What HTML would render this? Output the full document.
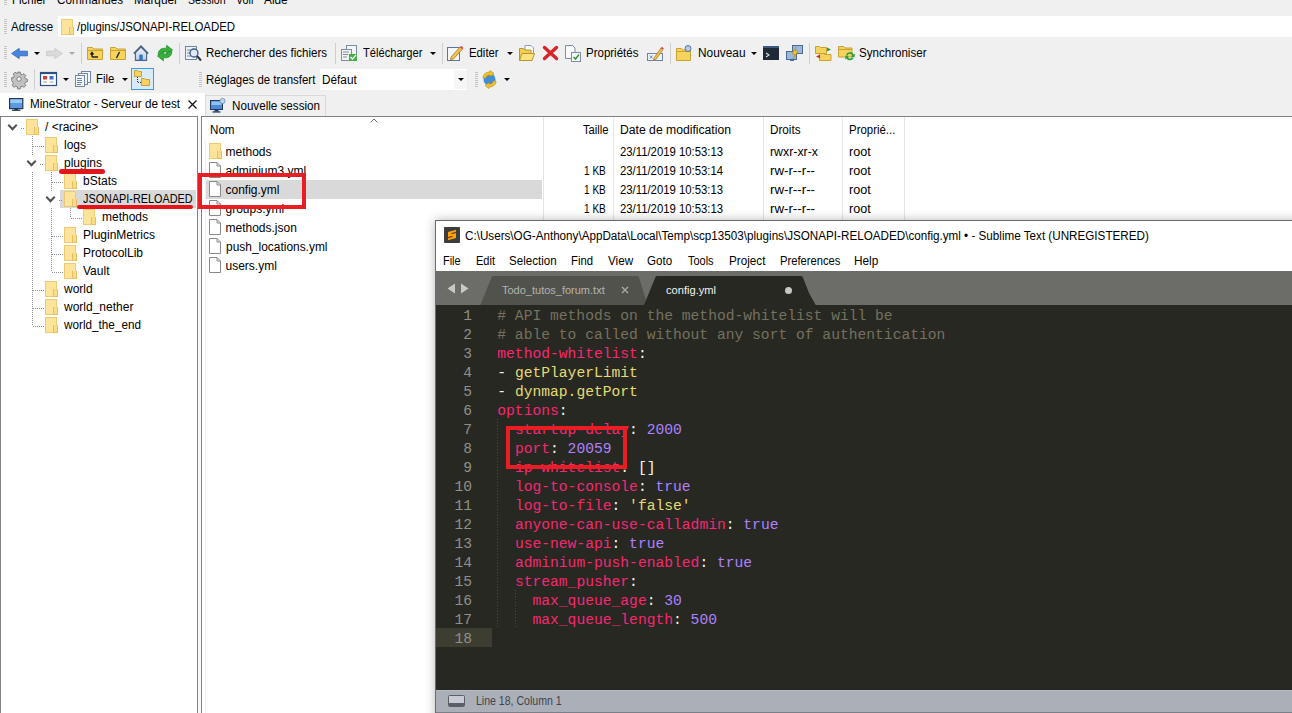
<!DOCTYPE html>
<html><head><meta charset="utf-8">
<style>
*{margin:0;padding:0;box-sizing:border-box}
html,body{width:1292px;height:713px;overflow:hidden;background:#f0f0f0;font-family:"Liberation Sans",sans-serif;font-size:12px;color:#000}
.a{position:absolute}
.t{position:absolute;white-space:nowrap;transform-origin:0 0}
svg{position:absolute;overflow:visible}
.grip{position:absolute;width:3px;background:repeating-linear-gradient(to bottom,#c4c4c4 0 1px,transparent 1px 2px)}
.sep{position:absolute;width:1px;background:#cfcfcf}
.dd{position:absolute;width:0;height:0;border-left:3px solid transparent;border-right:3px solid transparent;border-top:3px solid #000}
.fo{position:absolute;width:12px;height:16px;background:#fde49a;border:1px solid #eccb72}
.fo:after{content:"";position:absolute;right:-2px;bottom:-1px;width:3px;height:7px;border:1px solid #e6c062;border-top:none;background:#fbdc86}
.fi{position:absolute;width:12px;height:16px}
.dv{position:absolute;width:1px;background:repeating-linear-gradient(to bottom,#8c8c8c 0 1px,transparent 1px 2px)}
.dh{position:absolute;height:1px;background:repeating-linear-gradient(to right,#8c8c8c 0 1px,transparent 1px 2px)}
.chev{position:absolute;width:7px;height:7px;border-right:2px solid #505050;border-bottom:2px solid #505050;transform:rotate(45deg)}
.col{position:absolute;width:1px;background:#e5e5e5}
#subl{position:absolute;left:435px;top:220px;width:900px;height:500px;z-index:5;background:#272822;border:1px solid #6a6a6a;box-shadow:0 0 10px rgba(0,0,0,0.28)}
#subl .t{z-index:6}
.cl{position:absolute;left:497.3px;padding-top:2px;font-family:"Liberation Mono",monospace;font-size:14.65px;line-height:19px;white-space:pre;color:#f8f8f2;z-index:6}
.ln{position:absolute;left:436px;padding-top:2px;width:36px;text-align:right;font-family:"Liberation Mono",monospace;font-size:14.58px;line-height:19px;color:#90908a;z-index:6}
.c{color:#75715e}.k{color:#f92672}.s{color:#e6db74}.n{color:#ae81ff}.w{color:#f8f8f2}
.red{position:absolute;z-index:20;border:4.6px solid #ea1d25}
.rul{position:absolute;z-index:20;height:4.6px;background:#e3151c;border-radius:3px}
</style></head><body>

<!-- address field -->
<div class="grip" style="left:4px;top:19px;height:15px"></div>
<div class="a" style="left:58px;top:16px;width:1234px;height:21px;background:#fff"></div>
<div class="fo" style="left:61px;top:19px;height:16px"></div>
<div class="grip" style="left:4px;top:0px;height:6px"></div>

<!-- toolbar 1 -->
<div class="grip" style="left:4px;top:46px;height:13px"></div>
<svg style="left:11px;top:48px" width="17" height="11" viewBox="0 0 17 11"><path d="M0.6 5.5 L8.2 0.4 L8.2 3.2 L16.4 3.2 L16.4 7.8 L8.2 7.8 L8.2 10.6 Z" fill="#4688e0" stroke="#2b5fb4" stroke-width="0.8" stroke-linejoin="round"/></svg>
<div class="dd" style="left:34px;top:52px"></div>
<svg style="left:46px;top:48px" width="17" height="11" viewBox="0 0 17 11"><path d="M16.4 5.5 L8.8 0.4 L8.8 3.2 L0.6 3.2 L0.6 7.8 L8.8 7.8 L8.8 10.6 Z" fill="#dadada" stroke="#c8c8c8" stroke-width="0.8" stroke-linejoin="round"/></svg>
<div class="dd" style="left:69px;top:52px;border-top-color:#a8a8a8"></div>
<div class="sep" style="left:81px;top:43px;height:21px"></div>
<svg style="left:87px;top:46px" width="16" height="14" viewBox="0 0 16 14"><path d="M0.5 1.5 h5 l1.5 1.5 h8.5 v10.5 h-15 z" fill="#f6d35c" stroke="#c9a233"/><path d="M0.5 4.5 h15" stroke="#c9a233"/><path d="M5 11 h6 M5 11 v-4 M3.5 8.5 L5 6.5 L6.5 8.5" stroke="#222" stroke-width="1.4" fill="none"/></svg>
<svg style="left:110px;top:46px" width="16" height="14" viewBox="0 0 16 14"><path d="M0.5 1.5 h5 l1.5 1.5 h8.5 v10.5 h-15 z" fill="#f6d35c" stroke="#c9a233"/><path d="M0.5 4.5 h15" stroke="#c9a233"/><path d="M9.5 6 L6.5 12" stroke="#222" stroke-width="1.4"/></svg>
<svg style="left:133px;top:45px" width="16" height="16" viewBox="0 0 16 16"><defs><linearGradient id="hg" x1="0" y1="0" x2="0" y2="1"><stop offset="0" stop-color="#eef3fa"/><stop offset="1" stop-color="#b9cde6"/></linearGradient></defs><path d="M8 2.2 L13.6 7.6 L13.6 15.4 L2.4 15.4 L2.4 7.6 Z" fill="url(#hg)" stroke="#4d6382" stroke-width="1.1"/><path d="M0.8 8.6 L8 1.2 L15.2 8.6" stroke="#4d6382" stroke-width="1.6" fill="none"/><rect x="6.3" y="9.6" width="3.4" height="5.8" fill="#2f72cc"/></svg>
<svg style="left:157px;top:45px" width="16" height="16" viewBox="0 0 16 16"><path d="M1.2 9.5 C1.2 5.2 3.8 3.2 8 3.2 L9.6 3.2 L9.6 0.2 L15.6 5 L9.6 9.8 L9.6 6.9 L8 6.9 C5.6 6.9 4.9 7.8 4.7 9.5 Z" fill="#36b23a" stroke="#23872a" stroke-width="0.7"/><path d="M1.2 9.5 C1.2 5.2 3.8 3.2 8 3.2 L9.6 3.2 L9.6 0.2 L15.6 5 L9.6 9.8 L9.6 6.9 L8 6.9 C5.6 6.9 4.9 7.8 4.7 9.5 Z" transform="rotate(180 8 8)" fill="#36b23a" stroke="#23872a" stroke-width="0.7"/></svg>
<div class="sep" style="left:179px;top:43px;height:21px"></div>
<svg style="left:185px;top:45px" width="17" height="17" viewBox="0 0 17 17"><rect x="0.5" y="1.5" width="11" height="13" fill="#eef2f8" stroke="#6c86a8"/><path d="M2 5h4 M2 8h3 M2 11h4" stroke="#6c86a8"/><circle cx="9" cy="8" r="4" fill="#dfe9f5" stroke="#3d5a80" stroke-width="1.3"/><path d="M12 11 L16 15.5" stroke="#333" stroke-width="2"/></svg>
<div class="sep" style="left:335px;top:43px;height:21px"></div>
<svg style="left:341px;top:45px" width="17" height="16" viewBox="0 0 17 16"><rect x="5.5" y="0.5" width="10" height="11" fill="#f4f4f4" stroke="#7a8ca6"/><rect x="0.5" y="4.5" width="10" height="11" fill="#f4f4f4" stroke="#7a8ca6"/><path d="M2 7h6 M2 9.5h5 M2 12h4" stroke="#7a8ca6"/><rect x="8" y="9" width="8" height="7" fill="#43b043"/><path d="M9.5 12 L11.5 14 L15 10" stroke="#fff" stroke-width="1.3" fill="none"/></svg>
<div class="dd" style="left:430px;top:52px"></div>
<div class="sep" style="left:442px;top:43px;height:21px"></div>
<svg style="left:447px;top:45px" width="17" height="16" viewBox="0 0 17 16"><rect x="0.5" y="2.5" width="12" height="13" fill="#f4f6f9" stroke="#5d7597"/><path d="M4 12 L13 2 L15.5 4 L6.5 14 L3.5 14.5 Z" fill="#f2c24a" stroke="#a8782a" stroke-width="0.8"/><path d="M13 2 L15.5 4 L16.5 3 L14 0.8 Z" fill="#e0404a"/></svg>
<div class="dd" style="left:507px;top:52px"></div>
<svg style="left:519px;top:45px" width="16" height="16" viewBox="0 0 16 16"><path d="M6 0.5 h6 l2.5 2.5 v7 h-8.5z" fill="#fff" stroke="#8aa0bd"/><path d="M0.5 3.5 h4 l1.5 1.5 h6 v10.5 h-11.5 z" fill="#f2cd4e" stroke="#b8952c"/><path d="M0.5 15.5 L3 8.5 h12.5 L13 15.5 z" fill="#fbe37c" stroke="#b8952c"/></svg>
<svg style="left:543px;top:46px" width="15" height="14" viewBox="0 0 15 14"><path d="M1.5 1.5 L13.5 12.5 M13.5 1.5 L1.5 12.5" stroke="#d8232a" stroke-width="3.4" stroke-linecap="round"/></svg>
<svg style="left:565px;top:45px" width="17" height="17" viewBox="0 0 17 17"><path d="M0.5 0.5 h7 l2.5 2.5 v10.5 h-9.5z" fill="#fafafa" stroke="#7d8ea6"/><rect x="6.5" y="7.5" width="9" height="9" fill="#f8f8f8" stroke="#7d8ea6"/><path d="M8.5 12 L10.5 14 L14 9.5" stroke="#2e9a35" stroke-width="1.5" fill="none"/></svg>
<svg style="left:647px;top:45px" width="17" height="16" viewBox="0 0 17 16"><rect x="0.5" y="8.5" width="15" height="7" fill="#f0f4f8" stroke="#6a86aa"/><path d="M3 10.5 L5.5 13.5 M5.5 10.5 L3 13.5" stroke="#6a86aa"/><path d="M7 13 L14 3 L16 4.5 L9 14.5 L6.5 15 Z" fill="#f2c24a" stroke="#a8782a" stroke-width="0.8"/><path d="M14 3 L16 4.5 L16.8 3.2 L14.8 1.8Z" fill="#e0404a"/></svg>
<div class="sep" style="left:670px;top:43px;height:21px"></div>
<svg style="left:676px;top:45px" width="16" height="16" viewBox="0 0 16 16"><path d="M0.5 3.5 h5 l1.5 1.5 h7.5 v10.5 h-14z" fill="#f6d35c" stroke="#c9a233"/><path d="M0.5 6.5 h14" stroke="#c9a233"/><circle cx="12" cy="3.5" r="3" fill="#b8cbe0" stroke="#5678a0"/></svg>
<div class="dd" style="left:751px;top:52px"></div>
<svg style="left:763px;top:45px" width="16" height="16" viewBox="0 0 16 16"><rect x="0" y="1" width="16" height="14" fill="#1f2a38"/><rect x="0" y="1" width="16" height="2" fill="#3c5a80"/><path d="M3 8 L6 10 L3 12" stroke="#e0e0e0" stroke-width="1.1" fill="none"/></svg>
<svg style="left:786px;top:45px" width="17" height="16" viewBox="0 0 17 16"><rect x="6.5" y="0.5" width="10" height="8" fill="#9bb8dc" stroke="#4a6a94"/><rect x="0.5" y="6.5" width="10" height="8" fill="#9bb8dc" stroke="#4a6a94"/><path d="M4 15.5h4" stroke="#4a6a94"/><path d="M10 2 L6 9 L9 9 L7 14 L12 6 L9 6 Z" fill="#f4d020" stroke="#b08a10" stroke-width="0.6"/></svg>
<div class="sep" style="left:809px;top:43px;height:21px"></div>
<svg style="left:815px;top:45px" width="17" height="16" viewBox="0 0 17 16"><path d="M0.5 1.5 h4 l1 1 h6 v6 h-11z" fill="#f6d35c" stroke="#c9a233"/><path d="M4.5 8.5 h4 l1 1 h6.5 v6 h-11.5z" fill="#f6d35c" stroke="#c9a233"/><path d="M12 2.5 L16 4.5 L12 6.5z" fill="#2aa03a"/><path d="M5 9.5 L1 11.5 L5 13.5z" fill="#d8302a"/></svg>
<svg style="left:838px;top:45px" width="17" height="16" viewBox="0 0 17 16"><path d="M0.5 1.5 h5 l1.5 1.5 h7 v9 h-13.5z" fill="#f6d35c" stroke="#c9a233"/><path d="M0.5 4.5 h13.5" stroke="#c9a233"/><path d="M8 10 A4 4 0 0 1 15.5 9.5 L16.8 8.5 L16.5 12.5 L13 11.5 L14.3 10.5 A2.5 2.5 0 0 0 9.5 10.8z" fill="#2aa03a"/><path d="M15.5 13 A4 4 0 0 1 8.5 13.5 L7.2 14.5 L7.5 10.5 L11 11.5 L9.8 12.5 A2.5 2.5 0 0 0 14 12.3z" fill="#2aa03a"/></svg>

<!-- toolbar 2 -->
<div class="grip" style="left:4px;top:72px;height:15px"></div>
<svg style="left:11px;top:71px" width="16" height="16" viewBox="0 0 16 16"><g transform="translate(8 8) scale(0.92) translate(-8 -8)"><path d="M6.6 0.5h2.8l0.5 2.2 1.6 0.7 1.9-1.2 2 2-1.2 1.9 0.7 1.6 2.2 0.5v2.8l-2.2 0.5-0.7 1.6 1.2 1.9-2 2-1.9-1.2-1.6 0.7-0.5 2.2H6.6l-0.5-2.2-1.6-0.7-1.9 1.2-2-2 1.2-1.9-0.7-1.6L0 9.4V6.6l2.2-0.5 0.7-1.6-1.2-1.9 2-2 1.9 1.2 1.6-0.7z" fill="#c2c2c2" stroke="#6e6e6e" stroke-width="0.9"/><circle cx="8" cy="8" r="2.4" fill="#f4f4f4" stroke="#6e6e6e" stroke-width="0.9"/></g></svg>
<div class="sep" style="left:34px;top:69px;height:21px"></div>
<svg style="left:40px;top:72px" width="17" height="14" viewBox="0 0 17 14"><rect x="0.5" y="0.5" width="16" height="13" fill="#fff" stroke="#2a4f86" stroke-width="1.2"/><rect x="0.5" y="0.5" width="16" height="1.6" fill="#2a4f86"/><rect x="3" y="4" width="4" height="3.5" fill="#d9383a"/><rect x="9.5" y="4" width="4" height="3.5" fill="#3a6cc8"/><path d="M3 10h4 M9.5 10h4" stroke="#8aa0c0"/></svg>
<div class="dd" style="left:63px;top:78px"></div>
<svg style="left:75px;top:71px" width="17" height="16" viewBox="0 0 17 16"><rect x="6.5" y="0.5" width="9" height="11" fill="#f4f6f9" stroke="#6f87a8"/><rect x="3.5" y="2.5" width="9" height="11" fill="#f4f6f9" stroke="#6f87a8"/><rect x="0.5" y="4.5" width="9" height="11" fill="#f4f6f9" stroke="#6f87a8"/><path d="M2 7.5h5 M2 9.5h5 M2 11.5h5 M2 13.5h4" stroke="#6f87a8"/></svg>
<div class="dd" style="left:122px;top:78px"></div>
<div class="a" style="left:131px;top:68px;width:23px;height:22px;background:#d9ebfa;border:1px solid #3c9ce0"></div>
<svg style="left:134px;top:70px" width="17" height="17" viewBox="0 0 17 17"><path d="M0.5 0.5h3l1 1h3v5h-7z" fill="#f6d35c" stroke="#c9a233"/><path d="M7.5 8.5h3l1 1h4v6h-8z" fill="#f6d35c" stroke="#c9a233"/><path d="M3.5 7v5.5h3.5" stroke="#333" stroke-dasharray="1 1" fill="none"/></svg>
<div class="grip" style="left:199px;top:72px;height:15px"></div>
<div class="a" style="left:320px;top:69px;width:147px;height:21px;background:#fff"></div>
<div class="a" style="left:454px;top:70px;width:13px;height:19px;background:#f6f6f6"></div><div class="dd" style="left:458px;top:78px"></div>
<div class="grip" style="left:475px;top:72px;height:15px"></div>
<svg style="left:481px;top:71px" width="17" height="17" viewBox="0 0 17 17"><circle cx="8.5" cy="8.5" r="6" fill="#3f8fd8"/><path d="M4 6 C5 3 9 2 12 4" stroke="#7cc060" stroke-width="2.5" fill="none"/><path d="M2 7 C2 3 5 1 9 1 L9 -0.5 L13 2.5 L9 5.5 L9 4 C6 4 5 5 5 7Z" fill="#f2c030" stroke="#b08818" stroke-width="0.6"/><path d="M15 10 C15 14 12 16 8 16 L8 17.5 L4 14.5 L8 11.5 L8 13 C11 13 12 12 12 10Z" fill="#f2c030" stroke="#b08818" stroke-width="0.6"/></svg>
<div class="dd" style="left:504px;top:78px"></div>

<!-- tabs -->
<div class="a" style="left:0;top:93px;width:205px;height:24px;background:#fff"></div>
<div class="a" style="left:205px;top:95px;width:121px;height:22px;background:#f0f0f0;border:1px solid #d9d9d9;border-bottom:none"></div>
<svg style="left:9px;top:98px" width="15" height="14" viewBox="0 0 15 14"><rect x="0.6" y="0.6" width="13.2" height="10" fill="#5b9ae6" stroke="#26384c" stroke-width="1.2"/><rect x="1.4" y="1.4" width="11.6" height="3.6" fill="#9cc8f4"/><rect x="5.5" y="10.6" width="3.4" height="1.4" fill="#26384c"/><rect x="3" y="11.6" width="8.4" height="1.3" fill="#26384c"/></svg>
<svg style="left:188px;top:100px" width="9" height="9" viewBox="0 0 9 9"><path d="M0.5 0.5 L8.5 8.5 M8.5 0.5 L0.5 8.5" stroke="#111" stroke-width="1.2"/></svg>
<svg style="left:210px;top:98px" width="16" height="15" viewBox="0 0 16 15"><rect x="0.5" y="2.5" width="12" height="9" fill="#4a8ad8" stroke="#203a5e"/><rect x="1.5" y="3.5" width="10" height="3.5" fill="#8ec0f2"/><rect x="4.5" y="12" width="4" height="1.5" fill="#203a5e"/><rect x="2.5" y="13.3" width="8" height="1.3" fill="#203a5e"/><circle cx="12.5" cy="3" r="2.6" fill="#c0d4ea" stroke="#6a8ab0" stroke-width="0.8"/></svg>

<div class="a" style="left:198px;top:117px;width:3px;height:596px;background:#f9f9f9"></div>
<!-- tree panel -->
<div class="a" style="left:0;top:116px;width:198px;height:597px;background:#fff;border:1px solid #828282;border-bottom:none"></div>
<!-- file panel -->
<div class="a" style="left:201px;top:116px;width:1091px;height:597px;background:#fff;border:1px solid #828282;border-bottom:none;border-right:none"></div>

<!-- tree content -->
<div class="a" style="left:60px;top:190px;width:136px;height:18px;background:#d9d9d9"></div>
<div class="chev" style="left:9px;top:122px"></div>
<div class="chev" style="left:28px;top:158px"></div>
<div class="chev" style="left:47px;top:194px"></div>
<div class="dh" style="left:21px;top:128px;width:4px"></div>
<div class="dh" style="left:40px;top:164px;width:4px"></div>
<div class="dh" style="left:59px;top:200px;width:4px"></div>
<div class="dv" style="left:32px;top:136px;height:19px"></div><div class="dv" style="left:32px;top:172px;height:154px"></div>
<div class="dh" style="left:33px;top:146px;width:11px"></div>
<div class="dh" style="left:33px;top:290px;width:11px"></div>
<div class="dh" style="left:33px;top:308px;width:11px"></div>
<div class="dh" style="left:33px;top:326px;width:11px"></div>
<div class="dv" style="left:51px;top:172px;height:19px"></div><div class="dv" style="left:51px;top:208px;height:64px"></div>
<div class="dh" style="left:52px;top:182px;width:11px"></div>
<div class="dh" style="left:52px;top:236px;width:11px"></div>
<div class="dh" style="left:52px;top:254px;width:11px"></div>
<div class="dh" style="left:52px;top:272px;width:11px"></div>
<div class="dv" style="left:70px;top:208px;height:10px"></div>
<div class="dh" style="left:71px;top:218px;width:11px"></div>
<div class="fo" style="left:26px;top:119px"></div>
<div class="fo" style="left:45px;top:137px"></div>
<div class="fo" style="left:45px;top:155px"></div>
<div class="fo" style="left:64px;top:173px"></div>
<div class="fo" style="left:64px;top:191px"></div>
<div class="fo" style="left:83px;top:209px"></div>
<div class="fo" style="left:64px;top:227px"></div>
<div class="fo" style="left:64px;top:245px"></div>
<div class="fo" style="left:64px;top:263px"></div>
<div class="fo" style="left:45px;top:281px"></div>
<div class="fo" style="left:45px;top:299px"></div>
<div class="fo" style="left:45px;top:317px"></div>

<!-- file list -->
<div class="col" style="left:543px;top:117px;height:110px"></div>
<div class="col" style="left:613px;top:117px;height:110px"></div>
<div class="col" style="left:763px;top:117px;height:110px"></div>
<div class="col" style="left:842px;top:117px;height:110px"></div>
<div class="col" style="left:904px;top:117px;height:110px"></div>
<div class="col" style="left:205px;top:141px;height:572px;background:#eef0f4"></div>
<svg style="left:370px;top:118px" width="8" height="5" viewBox="0 0 8 5"><path d="M0.5 4.5 L4 1 L7.5 4.5" stroke="#6d6d6d" fill="none"/></svg>
<div class="a" style="left:206px;top:180px;width:336px;height:19px;background:#d9d9d9"></div>
<div class="fo" style="left:209px;top:143px"></div>
<svg class="fi" style="left:209px;top:162px" viewBox="0 0 12 16"><path d="M0.5 0.5h7.5l3.5 3.5v11.5h-11z" fill="#fff" stroke="#8a8a8a"/><path d="M8 0.5v3.5h3.5" stroke="#8a8a8a" fill="none"/></svg>
<svg class="fi" style="left:209px;top:181px" viewBox="0 0 12 16"><path d="M0.5 0.5h7.5l3.5 3.5v11.5h-11z" fill="#fff" stroke="#8a8a8a"/><path d="M8 0.5v3.5h3.5" stroke="#8a8a8a" fill="none"/></svg>
<svg class="fi" style="left:209px;top:200px" viewBox="0 0 12 16"><path d="M0.5 0.5h7.5l3.5 3.5v11.5h-11z" fill="#fff" stroke="#8a8a8a"/><path d="M8 0.5v3.5h3.5" stroke="#8a8a8a" fill="none"/></svg>
<svg class="fi" style="left:209px;top:219px" viewBox="0 0 12 16"><path d="M0.5 0.5h7.5l3.5 3.5v11.5h-11z" fill="#fff" stroke="#8a8a8a"/><path d="M8 0.5v3.5h3.5" stroke="#8a8a8a" fill="none"/></svg>
<svg class="fi" style="left:209px;top:238px" viewBox="0 0 12 16"><path d="M0.5 0.5h7.5l3.5 3.5v11.5h-11z" fill="#fff" stroke="#8a8a8a"/><path d="M8 0.5v3.5h3.5" stroke="#8a8a8a" fill="none"/></svg>
<svg class="fi" style="left:209px;top:257px" viewBox="0 0 12 16"><path d="M0.5 0.5h7.5l3.5 3.5v11.5h-11z" fill="#fff" stroke="#8a8a8a"/><path d="M8 0.5v3.5h3.5" stroke="#8a8a8a" fill="none"/></svg>

<div class="t" style="left:12.0px;top:-6.86px;font-size:12px;line-height:14.4px;color:#000;transform:scaleX(0.9554);">Fichier</div>
<div class="t" style="left:57.0px;top:-6.86px;font-size:12px;line-height:14.4px;color:#000;transform:scaleX(0.9702);">Commandes</div>
<div class="t" style="left:133.5px;top:-6.86px;font-size:12px;line-height:14.4px;color:#000;transform:scaleX(0.9847);">Marquer</div>
<div class="t" style="left:187.6px;top:-6.86px;font-size:12px;line-height:14.4px;color:#000;transform:scaleX(0.8807);">Session</div>
<div class="t" style="left:235.7px;top:-6.86px;font-size:12px;line-height:14.4px;color:#000;transform:scaleX(0.8947);">Voir</div>
<div class="t" style="left:264.2px;top:-6.86px;font-size:12px;line-height:14.4px;color:#000;transform:scaleX(0.9868);">Aide</div>
<div class="t" style="left:11.0px;top:20.44px;font-size:12px;line-height:14.4px;color:#000;transform:scaleX(0.9541);">Adresse</div>
<div class="t" style="left:77.0px;top:20.44px;font-size:12px;line-height:14.4px;color:#000;transform:scaleX(0.9515);">/plugins/JSONAPI-RELOADED</div>
<div class="t" style="left:206.3px;top:46.44px;font-size:12px;line-height:14.4px;color:#000;transform:scaleX(0.9599);">Rechercher des fichiers</div>
<div class="t" style="left:362.5px;top:46.34px;font-size:12px;line-height:14.4px;color:#000;transform:scaleX(0.9277);">Télécharger</div>
<div class="t" style="left:469.4px;top:46.34px;font-size:12px;line-height:14.4px;color:#000;transform:scaleX(0.9442);">Editer</div>
<div class="t" style="left:586.4px;top:46.34px;font-size:12px;line-height:14.4px;color:#000;transform:scaleX(0.9581);">Propriétés</div>
<div class="t" style="left:698.2px;top:46.34px;font-size:12px;line-height:14.4px;color:#000;transform:scaleX(0.9889);">Nouveau</div>
<div class="t" style="left:859.1px;top:46.34px;font-size:12px;line-height:14.4px;color:#000;transform:scaleX(0.9639);">Synchroniser</div>
<div class="t" style="left:96.3px;top:72.14px;font-size:12px;line-height:14.4px;color:#000;transform:scaleX(0.9464);">File</div>
<div class="t" style="left:205.7px;top:72.94px;font-size:12px;line-height:14.4px;color:#000;transform:scaleX(0.9527);">Réglages de transfert</div>
<div class="t" style="left:322.3px;top:72.94px;font-size:12px;line-height:14.4px;color:#000;transform:scaleX(0.9815);">Défaut</div>
<div class="t" style="left:30.0px;top:97.14px;font-size:12px;line-height:14.4px;color:#000;transform:scaleX(0.9736);">MineStrator - Serveur de test</div>
<div class="t" style="left:232.0px;top:99.14px;font-size:12px;line-height:14.4px;color:#000;transform:scaleX(0.9701);">Nouvelle session</div>
<div class="t" style="left:45.0px;top:119.64px;font-size:12px;line-height:14.4px;color:#000;">/ &lt;racine&gt;</div>
<div class="t" style="left:64.0px;top:137.64px;font-size:12px;line-height:14.4px;color:#000;">logs</div>
<div class="t" style="left:64.0px;top:155.64px;font-size:12px;line-height:14.4px;color:#000;">plugins</div>
<div class="t" style="left:83.0px;top:173.64px;font-size:12px;line-height:14.4px;color:#000;">bStats</div>
<div class="t" style="left:83.0px;top:191.64px;font-size:12px;line-height:14.4px;color:#000;transform:scaleX(0.9023);">JSONAPI-RELOADED</div>
<div class="t" style="left:102.0px;top:209.64px;font-size:12px;line-height:14.4px;color:#000;">methods</div>
<div class="t" style="left:83.0px;top:227.64px;font-size:12px;line-height:14.4px;color:#000;">PluginMetrics</div>
<div class="t" style="left:83.0px;top:245.64px;font-size:12px;line-height:14.4px;color:#000;">ProtocolLib</div>
<div class="t" style="left:83.0px;top:263.64px;font-size:12px;line-height:14.4px;color:#000;">Vault</div>
<div class="t" style="left:64.0px;top:281.64px;font-size:12px;line-height:14.4px;color:#000;">world</div>
<div class="t" style="left:64.0px;top:299.64px;font-size:12px;line-height:14.4px;color:#000;">world_nether</div>
<div class="t" style="left:64.0px;top:317.64px;font-size:12px;line-height:14.4px;color:#000;transform:scaleX(0.9781);">world_the_end</div>
<div class="t" style="left:209.7px;top:123.14px;font-size:12px;line-height:14.4px;color:#000;transform:scaleX(0.9670);">Nom</div>
<div class="t" style="left:582.6px;top:123.14px;font-size:12px;line-height:14.4px;color:#000;transform:scaleX(0.9362);">Taille</div>
<div class="t" style="left:620.0px;top:123.14px;font-size:12px;line-height:14.4px;color:#000;transform:scaleX(1.0147);">Date de modification</div>
<div class="t" style="left:770.3px;top:123.14px;font-size:12px;line-height:14.4px;color:#000;transform:scaleX(0.9733);">Droits</div>
<div class="t" style="left:849.3px;top:123.14px;font-size:12px;line-height:14.4px;color:#000;transform:scaleX(0.9531);">Proprié...</div>
<div class="t" style="left:225.5px;top:145.14px;font-size:12px;line-height:14.4px;color:#000;">methods</div>
<div class="t" style="left:225.5px;top:164.14px;font-size:12px;line-height:14.4px;color:#000;">adminium3.yml</div>
<div class="t" style="left:225.5px;top:183.14px;font-size:12px;line-height:14.4px;color:#000;">config.yml</div>
<div class="t" style="left:225.5px;top:202.14px;font-size:12px;line-height:14.4px;color:#000;">groups.yml</div>
<div class="t" style="left:225.5px;top:221.14px;font-size:12px;line-height:14.4px;color:#000;">methods.json</div>
<div class="t" style="left:225.5px;top:240.14px;font-size:12px;line-height:14.4px;color:#000;transform:scaleX(0.9946);">push_locations.yml</div>
<div class="t" style="left:225.5px;top:259.14px;font-size:12px;line-height:14.4px;color:#000;">users.yml</div>
<div class="t" style="left:620.0px;top:145.14px;font-size:12px;line-height:14.4px;color:#000;transform:scaleX(0.9431);">23/11/2019 10:53:13</div>
<div class="t" style="left:770.3px;top:145.14px;font-size:12px;line-height:14.4px;color:#000;transform:scaleX(1.0290);">rwxr-xr-x</div>
<div class="t" style="left:849.3px;top:145.14px;font-size:12px;line-height:14.4px;color:#000;transform:scaleX(1.0494);">root</div>
<div class="t" style="left:583.8px;top:164.14px;font-size:12px;line-height:14.4px;color:#000;transform:scaleX(0.8380);">1 KB</div>
<div class="t" style="left:620.0px;top:164.14px;font-size:12px;line-height:14.4px;color:#000;transform:scaleX(0.9431);">23/11/2019 10:53:14</div>
<div class="t" style="left:770.3px;top:164.14px;font-size:12px;line-height:14.4px;color:#000;transform:scaleX(1.1074);">rw-r--r--</div>
<div class="t" style="left:849.3px;top:164.14px;font-size:12px;line-height:14.4px;color:#000;transform:scaleX(1.0494);">root</div>
<div class="t" style="left:583.8px;top:183.14px;font-size:12px;line-height:14.4px;color:#000;transform:scaleX(0.8380);">1 KB</div>
<div class="t" style="left:620.0px;top:183.14px;font-size:12px;line-height:14.4px;color:#000;transform:scaleX(0.9431);">23/11/2019 10:53:13</div>
<div class="t" style="left:770.3px;top:183.14px;font-size:12px;line-height:14.4px;color:#000;transform:scaleX(1.1074);">rw-r--r--</div>
<div class="t" style="left:849.3px;top:183.14px;font-size:12px;line-height:14.4px;color:#000;transform:scaleX(1.0494);">root</div>
<div class="t" style="left:583.8px;top:202.14px;font-size:12px;line-height:14.4px;color:#000;transform:scaleX(0.8380);">1 KB</div>
<div class="t" style="left:620.0px;top:202.14px;font-size:12px;line-height:14.4px;color:#000;transform:scaleX(0.9431);">23/11/2019 10:53:13</div>
<div class="t" style="left:770.3px;top:202.14px;font-size:12px;line-height:14.4px;color:#000;transform:scaleX(1.1074);">rw-r--r--</div>
<div class="t" style="left:849.3px;top:202.14px;font-size:12px;line-height:14.4px;color:#000;transform:scaleX(1.0494);">root</div>
<div class="t" style="left:465.4px;top:229.44px;font-size:12px;line-height:14.4px;color:#000;transform:scaleX(0.9719);z-index:6;">C:\Users\OG-Anthony\AppData\Local\Temp\scp13503\plugins\JSONAPI-RELOADED\config.yml • - Sublime Text (UNREGISTERED)</div>
<div class="t" style="left:443.4px;top:254.34px;font-size:12px;line-height:14.4px;color:#000;transform:scaleX(0.9102);z-index:6;">File</div>
<div class="t" style="left:475.5px;top:254.34px;font-size:12px;line-height:14.4px;color:#000;transform:scaleX(0.9189);z-index:6;">Edit</div>
<div class="t" style="left:509.1px;top:254.34px;font-size:12px;line-height:14.4px;color:#000;transform:scaleX(0.9642);z-index:6;">Selection</div>
<div class="t" style="left:571.4px;top:254.34px;font-size:12px;line-height:14.4px;color:#000;transform:scaleX(0.9424);z-index:6;">Find</div>
<div class="t" style="left:607.8px;top:254.34px;font-size:12px;line-height:14.4px;color:#000;transform:scaleX(0.9731);z-index:6;">View</div>
<div class="t" style="left:647.3px;top:254.34px;font-size:12px;line-height:14.4px;color:#000;transform:scaleX(0.9648);z-index:6;">Goto</div>
<div class="t" style="left:687.9px;top:254.34px;font-size:12px;line-height:14.4px;color:#000;transform:scaleX(0.9138);z-index:6;">Tools</div>
<div class="t" style="left:728.5px;top:254.34px;font-size:12px;line-height:14.4px;color:#000;transform:scaleX(0.9746);z-index:6;">Project</div>
<div class="t" style="left:779.6px;top:254.34px;font-size:12px;line-height:14.4px;color:#000;transform:scaleX(0.9336);z-index:6;">Preferences</div>
<div class="t" style="left:854.4px;top:254.34px;font-size:12px;line-height:14.4px;color:#000;transform:scaleX(0.9846);z-index:6;">Help</div>
<div class="t" style="left:502.0px;top:283.62px;font-size:11.5px;line-height:13.8px;color:#b4b4ae;transform:scaleX(0.9563);z-index:6;">Todo_tutos_forum.txt</div>
<div class="t" style="left:666.0px;top:283.62px;font-size:11.5px;line-height:13.8px;color:#f4f4f0;transform:scaleX(0.9659);z-index:6;">config.yml</div>
<div class="t" style="left:476.4px;top:693.64px;font-size:12px;line-height:14.4px;color:#40444c;transform:scaleX(0.8789);z-index:6;">Line 18, Column 1</div>

<!-- sublime -->
<div id="subl">
  <div class="a" style="left:0;top:0;width:900px;height:50px;background:#fff"></div>
  <div class="a" style="left:0;top:50px;width:900px;height:34px;background:#6c6c68"></div>
  <svg style="left:8px;top:6px" width="16" height="16" viewBox="0 0 16 16"><rect x="0" y="0" width="16" height="16" rx="1" fill="#3c3d3d"/><path d="M4 5 L12 2.8 L12 11 L4 13.2 Z" fill="#ffa00e"/><path d="M7.5 6.6 L12 5.4 M4 10.6 L8.5 9.4" stroke="#6a4a10" stroke-width="1.1"/></svg>
  <svg style="left:11px;top:62px" width="22" height="11" viewBox="0 0 22 11"><path d="M8 0.5 L0.5 5.5 L8 10.5Z" fill="#c8c8c4"/><path d="M14 0.5 L21.5 5.5 L14 10.5Z" fill="#c8c8c4"/></svg>
  <svg style="left:0;top:0" width="900" height="90" viewBox="0 0 900 90"><path d="M44.4 84 L55.6 56.2 Q56.2 55 57.6 55 L201.2 55 Q202.4 55 203 56.2 L211.4 84 Z" fill="#51524c"/><path d="M208 84 L219.4 56.2 Q220 55 221.4 55 L365 55 Q366.2 55 366.8 56.2 L373 72 L379.7 84 Z" fill="#272822"/></svg>
  
  <svg style="left:185px;top:65px" width="8" height="8" viewBox="0 0 8 8"><path d="M1 1 L7 7 M7 1 L1 7" stroke="#a8a8a4" stroke-width="1.4"/></svg>
  <div class="a" style="left:348.5px;top:66px;width:7px;height:7px;border-radius:50%;background:#c6c6c2"></div>
  <div class="a" style="left:0;top:407px;width:56px;height:19px;background:#3e3d32"></div>
  <div class="a" style="left:0;top:469px;width:900px;height:31px;background:#abafb8;border-top:1px solid #b6bac2"></div><div class="a" style="left:0;top:491px;width:900px;height:2px;background:#7c7f85"></div>
  <svg style="left:12px;top:474px" width="17" height="12" viewBox="0 0 17 12"><rect x="0.5" y="0.5" width="16" height="11" rx="1" fill="#c8ccd2" stroke="#5a5e66"/><rect x="1" y="8" width="15" height="3" fill="#5a5e66"/></svg>
</div>
<div class="cl" style="top:305px"><span class="c"># API methods on the method-whitelist will be</span></div>
<div class="ln" style="top:305px">1</div>
<div class="cl" style="top:324px"><span class="c"># able to called without any sort of authentication</span></div>
<div class="ln" style="top:324px">2</div>
<div class="cl" style="top:343px"><span class="k">method-whitelist</span><span class="w">:</span></div>
<div class="ln" style="top:343px">3</div>
<div class="cl" style="top:362px"><span class="w">- </span><span class="s">getPlayerLimit</span></div>
<div class="ln" style="top:362px">4</div>
<div class="cl" style="top:381px"><span class="w">- </span><span class="s">dynmap.getPort</span></div>
<div class="ln" style="top:381px">5</div>
<div class="cl" style="top:400px"><span class="k">options</span><span class="w">:</span></div>
<div class="ln" style="top:400px">6</div>
<div class="cl" style="top:419px"><span class="w">  </span><span class="k">startup-delay</span><span class="w">: </span><span class="n">2000</span></div>
<div class="ln" style="top:419px">7</div>
<div class="cl" style="top:438px"><span class="w">  </span><span class="k">port</span><span class="w">: </span><span class="n">20059</span></div>
<div class="ln" style="top:438px">8</div>
<div class="cl" style="top:457px"><span class="w">  </span><span class="k">ip-whitelist</span><span class="w">: []</span></div>
<div class="ln" style="top:457px">9</div>
<div class="cl" style="top:476px"><span class="w">  </span><span class="k">log-to-console</span><span class="w">: </span><span class="n">true</span></div>
<div class="ln" style="top:476px">10</div>
<div class="cl" style="top:495px"><span class="w">  </span><span class="k">log-to-file</span><span class="w">: </span><span class="s">'false'</span></div>
<div class="ln" style="top:495px">11</div>
<div class="cl" style="top:514px"><span class="w">  </span><span class="k">anyone-can-use-calladmin</span><span class="w">: </span><span class="n">true</span></div>
<div class="ln" style="top:514px">12</div>
<div class="cl" style="top:533px"><span class="w">  </span><span class="k">use-new-api</span><span class="w">: </span><span class="n">true</span></div>
<div class="ln" style="top:533px">13</div>
<div class="cl" style="top:552px"><span class="w">  </span><span class="k">adminium-push-enabled</span><span class="w">: </span><span class="n">true</span></div>
<div class="ln" style="top:552px">14</div>
<div class="cl" style="top:571px"><span class="w">  </span><span class="k">stream_pusher</span><span class="w">:</span></div>
<div class="ln" style="top:571px">15</div>
<div class="cl" style="top:590px"><span class="w">    </span><span class="k">max_queue_age</span><span class="w">: </span><span class="n">30</span></div>
<div class="ln" style="top:590px">16</div>
<div class="cl" style="top:609px"><span class="w">    </span><span class="k">max_queue_length</span><span class="w">: </span><span class="n">500</span></div>
<div class="ln" style="top:609px">17</div>
<div class="cl" style="top:628px"></div>
<div class="ln" style="top:628px">18</div>
<div class="dv" style="left:497px;top:419px;height:208px;background:repeating-linear-gradient(to bottom,#4a4a42 0 1px,transparent 1px 3px);z-index:6"></div>
<div class="dv" style="left:515px;top:590px;height:38px;background:repeating-linear-gradient(to bottom,#4a4a42 0 1px,transparent 1px 3px);z-index:6"></div>

<!-- annotations -->
<div class="rul" style="left:59px;top:169px;width:46px"></div>
<div class="rul" style="left:77px;top:204.5px;width:116px"></div>
<div class="red" style="left:198px;top:172.5px;width:108px;height:36.5px"></div>
<div class="red" style="left:506px;top:426px;width:121px;height:42.5px"></div>

</body></html>
